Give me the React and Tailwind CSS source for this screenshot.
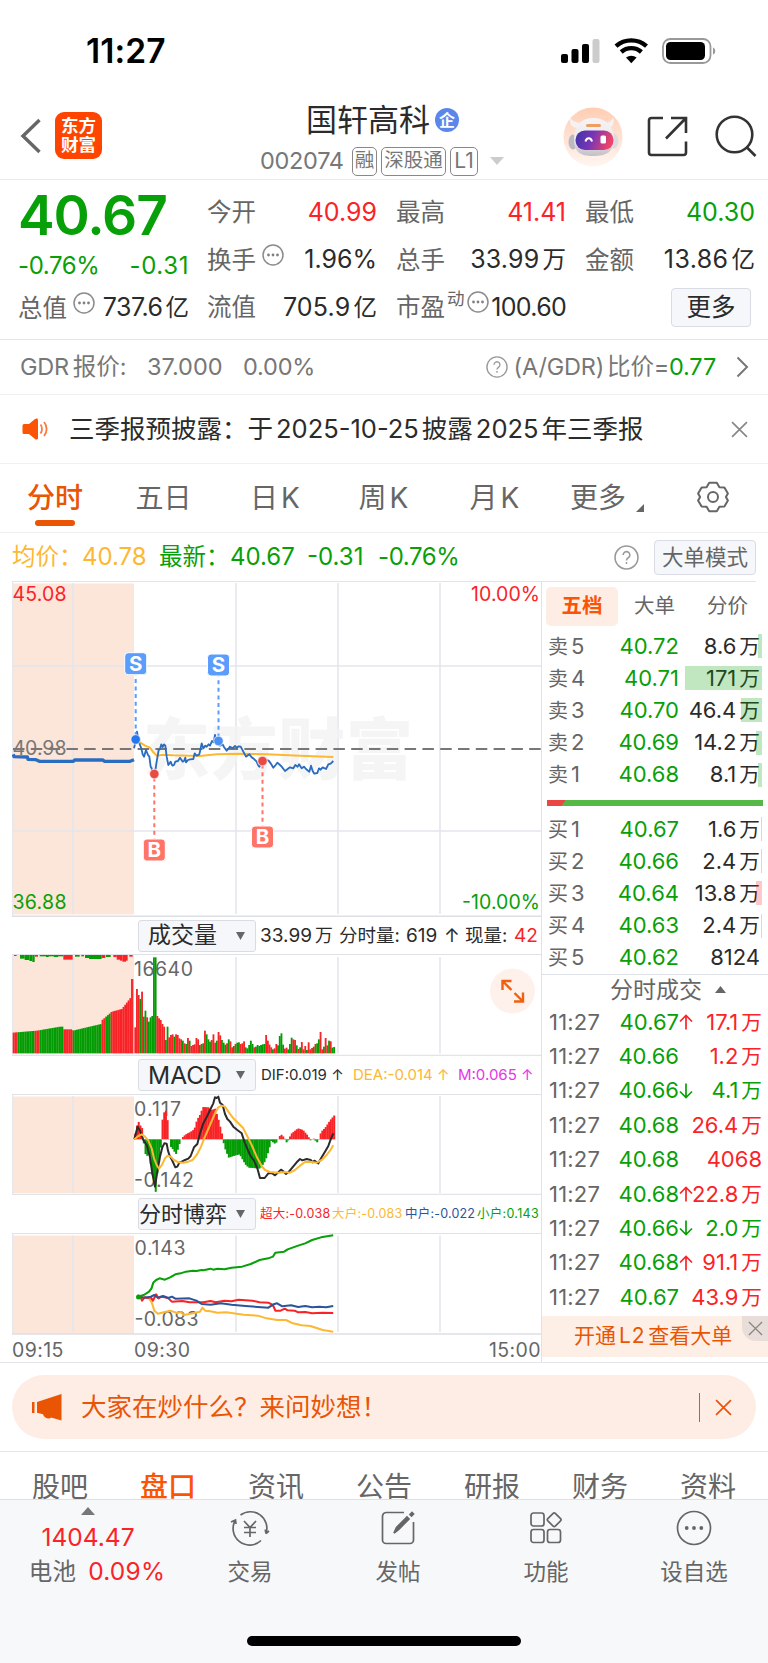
import React from 'react';

const quotes = [
  { label: '今开', value: '40.99', color: 'text-[#fa2328]' },
  { label: '最高', value: '41.41', color: 'text-[#fa2328]' },
  { label: '最低', value: '40.30', color: 'text-[#08a008]' },
];

const sells = [
  { label: '5', price: '40.72', vol: '8.6万', bar: 4 },
  { label: '4', price: '40.71', vol: '171万', bar: 77 },
  { label: '3', price: '40.70', vol: '46.4万', bar: 21 },
  { label: '2', price: '40.69', vol: '14.2万', bar: 6 },
  { label: '1', price: '40.68', vol: '8.1万', bar: 4 },
];

const buys = [
  { label: '1', price: '40.67', vol: '1.6万', bar: 1 },
  { label: '2', price: '40.66', vol: '2.4万', bar: 1 },
  { label: '3', price: '40.64', vol: '13.8万', bar: 6 },
  { label: '4', price: '40.63', vol: '2.4万', bar: 1 },
  { label: '5', price: '40.62', vol: '8124', bar: 0 },
];

const ticks = [
  { price: '40.67', dir: 'up', vol: '17.1万', red: true },
  { price: '40.66', dir: '', vol: '1.2万', red: true },
  { price: '40.66', dir: 'down', vol: '4.1万', red: false },
  { price: '40.68', dir: '', vol: '26.4万', red: true },
  { price: '40.68', dir: '', vol: '4068', red: true },
  { price: '40.68', dir: 'up', vol: '22.8万', red: true },
  { price: '40.66', dir: 'down', vol: '2.0万', red: false },
  { price: '40.68', dir: 'up', vol: '91.1万', red: true },
  { price: '40.67', dir: '', vol: '43.9万', red: true },
];

// chart series, in thirds of a pixel
const preLine = '40,538 42,545 82,546 84,553 108,554 118,559 220,559 224,555 308,555 314,559 390,559 402,554';
const priceLine =
  '402,520 408,495 411,470 416,500 424,520 428,538 432,545 438,525 444,540 448,545 452,575 455,580 458,597 463,597 467,580 470,560 476,525 480,522 484,508 488,516 492,508 496,512 500,545 505,570 512,560 515,568 518,572 522,570 526,560 534,558 540,548 548,560 552,558 556,548 558,562 564,555 570,553 580,552 584,535 590,542 598,538 602,520 605,505 610,520 616,512 620,515 626,508 630,512 636,498 641,502 645,480 650,500 660,512 668,508 672,516 680,527 686,520 690,515 698,520 705,513 710,518 716,514 722,515 730,530 738,545 748,538 756,548 760,550 770,560 774,570 778,575 788,560 800,555 806,557 812,565 820,578 827,570 832,563 840,570 845,575 855,588 863,582 870,577 880,580 886,570 893,575 897,568 905,580 912,575 918,582 928,590 933,572 938,588 943,596 952,594 957,580 962,584 968,577 978,582 985,568 992,566 1000,558';
const avgLine = '411,488 420,502 435,512 450,518 460,532 470,542 490,539 520,541 600,543 650,538 720,536 800,538 900,542 1000,546';
const difLine =
  '403,688 408,668 413,650 420,662 430,690 440,705 450,742 457,790 465,830 472,785 480,740 487,712 493,700 500,701 504,722 508,735 516,750 526,772 532,770 538,758 545,755 555,750 565,746 572,738 582,712 592,702 600,670 610,640 620,622 630,600 640,580 645,562 650,564 655,560 660,578 668,585 675,612 682,627 690,635 700,650 712,660 725,670 735,700 750,735 762,752 772,775 780,804 794,804 805,790 815,789 825,796 835,787 843,779 850,784 858,792 866,786 875,775 890,757 900,747 907,751 920,747 932,750 938,757 943,752 955,760 965,742 975,725 985,708 992,688 1000,670';
const deaLine =
  '403,688 415,678 425,673 435,680 445,692 455,715 462,745 470,765 477,776 485,766 495,745 503,737 512,740 522,750 535,757 550,758 565,755 578,750 590,735 603,710 615,680 630,645 645,610 655,592 665,587 675,590 685,605 700,625 715,640 730,655 740,675 755,705 770,740 785,768 795,780 810,786 835,788 855,786 870,788 885,780 900,767 915,756 930,755 950,758 965,750 980,735 990,722 1000,706';
const smallLine =
  '392,320 410,315 425,305 432,295 437,278 445,270 455,265 470,269 485,262 500,253 515,250 530,245 550,242 560,243 575,240 580,241 600,236 608,239 620,236 640,238 660,233 690,230 715,222 740,210 765,205 778,200 785,188 810,185 820,178 850,167 870,160 890,150 915,142 950,136';
const superLine =
  '392,320 400,320 405,332 412,322 420,324 430,322 436,332 445,313 452,325 460,320 470,322 480,325 490,335 520,333 540,337 580,337 600,333 615,337 640,332 660,334 680,329 720,332 740,337 765,338 778,345 785,362 800,362 812,356 820,361 840,362 850,367 870,366 890,370 920,368 950,369';
const midLine =
  '392,316 400,320 410,323 430,320 440,315 450,323 465,318 480,324 490,320 500,326 540,325 560,332 575,342 600,344 630,340 660,344 700,348 735,351 765,353 780,343 790,340 805,349 830,346 850,351 870,348 890,352 910,350 930,352 950,348';
const bigLine =
  '392,320 405,322 425,325 433,338 440,362 450,371 470,366 485,362 505,369 515,366 525,375 550,370 570,365 577,353 585,362 600,364 620,368 645,367 680,372 695,374 735,377 760,385 790,390 815,390 835,400 860,406 885,408 920,420 950,425';

const preVolume = [[38, 62], [110, 68], [180, 80], [190, 80], [191, 72], [217, 72], [218, 68], [260, 78], [303, 88], [306, 100], [320, 112], [335, 125], [365, 133], [386, 160], [392, 168], [394, 223], [400, 223]];
const macdPoints = [[402, 5], [407, 25], [413, 57], [420, 42], [428, 30], [430, -8], [434, -42], [440, -50], [446, -45], [452, -80], [460, -110], [466, -160], [470, -110], [477, -65], [482, -20], [484, 45], [489, 72], [495, 92], [500, 75], [506, 20], [508, -18], [518, -30], [527, -45], [535, -25], [540, -4], [545, 4], [555, 14], [570, 22], [582, 30], [590, 58], [600, 75], [608, 97], [625, 96], [633, 88], [645, 92], [654, 62], [665, 18], [672, -22], [685, -55], [700, -50], [718, -45], [735, -75], [745, -85], [780, -88], [795, -65], [805, -35], [813, -5], [825, -14], [832, -5], [836, 8], [844, 14], [853, 4], [858, -10], [865, -2], [872, 16], [893, 33], [908, 28], [922, 12], [932, -6], [938, 6], [943, -2], [952, -10], [957, 2], [962, 22], [975, 35], [990, 58], [1003, 73]];
const volumes =
  '78r 193r 175r 163g 185r 110g 128g 108r 95g 108g 112g 288g 288g 112r 105r 100r 88r 80r 40g 80g 48r 55r 57r 50g 57r 55r 45r 42r 38g 30r 28g 46r 38g 22r 25r 27r 46r 42r 25g 28r 30g 68r 57g 42g 35g 40r 57r 32r 38g 64r 54r 40g 32g 26g 30r 42g 36r 18r 22g 28r 32g 33g 28r 30r 36r 18g 15g 25g 38g 28g 18r 20g 25g 22g 25g 27g 28g 55r 38r 26r 18r 12g 15r 28r 24g 52g 60g 26g 14r 17r 12g 28g 47g 42r 40r 24g 13r 18g 34r 12r 22r 10g 33r 12r 16r 20g 28r 30g 42g 64r 12r 20g 46r 24r 38g 36r 17g 19g 20r 15r 12r 20r 14r 10r 12r 8r'.split(' ').slice(0, 118);

const preColors = [[38, 53, 'r'], [53, 104, 'g'], [104, 119, 'r'], [119, 190, 'g'], [190, 218, 'r'], [218, 305, 'g'], [305, 316, 'r'], [316, 332, 'g'], [332, 400, 'r']];
const unmatched = [
  [42, 8, 3, 'r'], [60, 14, 11, 'g'], [74, 14, 15, 'g'], [88, 9, 18, 'g'], [97, 7, 21, 'g'], [105, 9, 5, 'r'], [119, 71, 4, 'g'], [138, 8, 6, 'g'], [162, 12, 6, 'g'],
  [190, 28, 14, 'r'], [225, 14, 5, 'g'], [244, 8, 4, 'g'], [255, 12, 9, 'g'], [267, 38, 12, 'g'], [305, 11, 9, 'r'], [318, 14, 6, 'g'], [340, 10, 6, 'r'],
  [350, 10, 14, 'r'], [360, 7, 17, 'r'], [367, 11, 20, 'r'], [378, 5, 17, 'r'], [388, 10, 5, 'r'],
];

const fills = { r: '#f82326', g: '#049c04' };

// linear interpolation between [x, y] pairs
const sample = (points, x) => {
  for (let i = 1; i < points.length; i++) {
    const [x0, y0] = points[i - 1];
    const [x1, y1] = points[i];
    if (x <= x1) return y0 + ((y1 - y0) * (x - x0)) / (x1 - x0);
  }
  return points[points.length - 1][1];
};

const Amount = ({ children }) => {
  const match = /^(.*?)([万亿])$/.exec(children);
  if (!match) return children;
  return (
    <>
      {match[1]}
      <span className="ml-[3px] tracking-normal text-[0.94em]">{match[2]}</span>
    </>
  );
};

const Dots = ({ className }) => (
  <svg className={className} width="22" height="22" viewBox="0 0 22 22">
    <circle cx="11" cy="11" r="10" fill="none" stroke="#8c8c8c" strokeWidth="1.5" />
    <circle cx="6.5" cy="11" r="1.4" fill="#808080" />
    <circle cx="11" cy="11" r="1.4" fill="#808080" />
    <circle cx="15.5" cy="11" r="1.4" fill="#808080" />
  </svg>
);

const Help = ({ size }) => (
  <svg width={size} height={size} viewBox="0 0 24 24" fill="none" stroke="#999" strokeWidth="1.5">
    <circle cx="12" cy="12" r="11" />
    <path d="M8.8 9.6a3.2 3.2 0 1 1 5 2.6c-1.2.8-1.8 1.3-1.8 2.6" />
    <path d="M12 16.4v1.8" />
  </svg>
);

const Cross = ({ size, color, width = 1.6 }) => (
  <svg width={size} height={size} viewBox="0 0 16 16" stroke={color} strokeWidth={width}>
    <path d="M1 1l14 14M15 1L1 15" />
  </svg>
);

const Arrow = ({ dir }) => (
  <svg width="14" height="16" viewBox="0 0 14 16" fill="none" stroke={dir === 'up' ? '#fa2328' : '#08a008'} strokeWidth="1.7">
    {dir === 'up' && <path d="M7 15.5V1.5M1 7.5l6-6 6 6" />}
    {dir === 'down' && <path d="M7 .5v14M1 8.5l6 6 6-6" />}
  </svg>
);

const StatusBar = () => (
  <div className="flex h-[100px] items-start justify-between pl-[86px] pr-[52px] pt-[38px]">
    <span className="text-[33.5px] font-semibold leading-[26px] tracking-[0.1px] text-black">11:27</span>
    <svg width="156" height="26" viewBox="0 0 156 26">
      <rect x="1" y="16" width="7" height="9" rx="2" />
      <rect x="11.5" y="11" width="7" height="14" rx="2" />
      <rect x="22" y="6" width="7" height="19" rx="2" />
      <rect x="32.5" y="1" width="7" height="24" rx="2" fill="#ccc" />
      <g fill="none" stroke="#000" strokeWidth="4.4">
        <path d="M56 8.2a23 23 0 0 1 30.5 0" />
        <path d="M61.2 14a15 15 0 0 1 20.2 0" />
      </g>
      <path d="M66 19.6a8.5 8.5 0 0 1 10.6 0L71.3 25.3z" />
      <rect x="103" y="1" width="47.5" height="24" rx="7.5" fill="none" stroke="#999" strokeWidth="1.8" />
      <rect x="106" y="4" width="39" height="18" rx="4.5" />
      <path d="M153 9.5c3 1 3 6 0 7z" fill="#999" />
    </svg>
  </div>
);

const Robot = () => (
  <svg width="60" height="60" viewBox="0 0 60 60">
    <defs>
      <linearGradient id="halo" x1="0" y1="0" x2="0" y2="1">
        <stop offset="0" stopColor="#ffcdb3" />
        <stop offset="1" stopColor="#fff6f1" />
      </linearGradient>
      <linearGradient id="visor" x1="0" y1="0" x2="1" y2="0.2">
        <stop offset="0" stopColor="#3d34a8" />
        <stop offset="0.5" stopColor="#7a35b5" />
        <stop offset="1" stopColor="#ee4468" />
      </linearGradient>
      <linearGradient id="shell" x1="0" y1="0" x2="0" y2="1">
        <stop offset="0" stopColor="#f6f4f5" />
        <stop offset="0.5" stopColor="#eceaec" />
        <stop offset="1" stopColor="#c4c0c8" />
      </linearGradient>
    </defs>
    <circle cx="30" cy="30" r="29.5" fill="url(#halo)" />
    <path d="M7 10c-1 6 1 10 7 11l5-5c-6 0-10-2-12-6zM50 10c2 6 0 10-5 11l-4-5c5 0 8-2 9-6z" fill="#f6f2f4" />
    <ellipse cx="10" cy="35" rx="4.5" ry="7.5" fill="#bdb9c2" />
    <ellipse cx="51" cy="34" rx="4.5" ry="7.5" fill="#dedbe0" />
    <path d="M11 32c0-13 7-21 19-21s21 8 21 21-8 17-21 17-19-4-19-17z" fill="url(#shell)" />
    <rect x="23" y="17" width="15" height="3" rx="1.5" fill="#ee9e62" />
    <rect x="12.5" y="23.5" width="38" height="19.5" rx="9.5" fill="url(#visor)" />
    <path d="M22.5 34.5c1-4.5 5.5-4.5 6.5 0" fill="none" stroke="#fff" strokeWidth="2" />
    <rect x="37.5" y="28.5" width="5.5" height="8" rx="1.5" fill="#fff" />
  </svg>
);

const Header = () => (
  <div className="relative flex h-[80px] items-start justify-between border-b border-[#e9e9e9] pl-[20px] pr-[11px] pt-[7px]">
    <div className="flex items-center pt-[5px]">
      <svg width="22" height="36" viewBox="0 0 22 36" fill="none" stroke="#666" strokeWidth="3.4">
        <path d="M19.5 2L3 18l16.5 16" />
      </svg>
      <div className="ml-[13px] flex h-[47px] w-[47px] flex-col items-center justify-center rounded-[9px] bg-[#ff4400] text-[17.5px] font-bold leading-[18.5px] text-white">
        <span>东方</span>
        <span>财富</span>
      </div>
    </div>
    {/* title block is centred on the screen, not between the side icons */}
    <div className="absolute left-[260px] top-0 w-[250px]">
      <div className="flex h-[38px] items-center pl-[46px] pt-px">
        <span className="text-[31px] leading-[38px] text-[#2b2b2b]">国轩高科</span>
        <span className="ml-[5px] flex h-[24px] w-[24px] items-center justify-center rounded-full bg-[#5b87ea] text-[16px] font-bold leading-none text-white">企</span>
      </div>
      <div className="mt-[8px] flex h-[30px] items-center text-[#777]">
        <span className="w-[92px] text-[23.5px] tracking-[-0.3px]">002074</span>
        <span className="flex h-[29px] w-[25px] items-center justify-center rounded-[5px] border-[1.5px] border-[#888] text-[19.5px]">融</span>
        <span className="ml-[4px] flex h-[29px] w-[65px] items-center justify-center rounded-[5px] border-[1.5px] border-[#888] text-[19.5px]">深股通</span>
        <span className="ml-[4px] flex h-[29px] w-[28px] items-center justify-center rounded-[5px] border-[1.5px] border-[#888] text-[21px]">L1</span>
        <svg className="ml-[12px]" width="14" height="8" viewBox="0 0 14 8">
          <path d="M0 0h14L7 8z" fill="#ccc" />
        </svg>
      </div>
    </div>
    <div className="flex items-start">
      <Robot />
      <svg className="ml-[24px] mt-[9px]" width="41" height="41" viewBox="0 0 41 41" fill="none" stroke="#333" strokeWidth="2.6">
        <path d="M16 2H4.5A2.5 2.5 0 0 0 2 4.5v32A2.5 2.5 0 0 0 4.5 39h32a2.5 2.5 0 0 0 2.5-2.5V25.5M24 2h15v15M39 2L19 22.5" />
      </svg>
      <svg className="ml-[27px] mt-[7px]" width="42" height="43" viewBox="0 0 42 43" fill="none" stroke="#333" strokeWidth="2.6">
        <circle cx="19.5" cy="20.5" r="17.8" />
        <path d="M31.5 33l9 9" />
      </svg>
    </div>
  </div>
);

const Quote = () => (
  <div className="flex h-[160px] border-b border-[#e4e4e4] pl-[18px] text-[25px] text-[#666]">
    <div className="w-[171px] pt-[8px] text-[#08a008]">
      <div className="text-[55px] font-semibold leading-[54px] tracking-[-1.1px]">40.67</div>
      <div className="mt-[7px] flex h-[34px] items-center justify-between text-[24px] tracking-[-0.4px]">
        <span>-0.76%</span>
        <span className="tracking-[0.6px]">-0.31</span>
      </div>
      <div className="mt-[8px] flex h-[34px] items-center text-[#666]">
        <span className="text-[24.5px]">总值</span>
        <Dots className="ml-[6px] -mt-[11px]" />
        <span className="ml-auto tracking-[-0.5px] text-[#2b2b2b]"><Amount>737.6亿</Amount></span>
      </div>
    </div>
    <div className="ml-[18px] grid w-[548px] grid-cols-[170px_170px_170px] grid-rows-[47px_48px_47px] gap-x-[19px] pt-[9px]">
      {quotes.map((q) => (
        <div key={q.label} className="flex items-center justify-between">
          <span className="text-[24.5px]">{q.label}</span>
          <span className={q.color}>{q.value}</span>
        </div>
      ))}
      <div className="flex items-center">
        <span className="text-[24.5px]">换手</span>
        <Dots className="ml-[6px] -mt-[10px]" />
        <span className="ml-auto text-[#2b2b2b]">1.96%</span>
      </div>
      <div className="flex items-center justify-between">
        <span className="text-[24.5px]">总手</span>
        <span className="tracking-[0.2px] text-[#2b2b2b]"><Amount>33.99万</Amount></span>
      </div>
      <div className="flex items-center justify-between">
        <span className="text-[24.5px]">金额</span>
        <span className="tracking-[0.4px] text-[#2b2b2b]"><Amount>13.86亿</Amount></span>
      </div>
      <div className="flex items-center justify-between">
        <span className="text-[24.5px]">流值</span>
        <span className="tracking-[0.2px] text-[#2b2b2b]"><Amount>705.9亿</Amount></span>
      </div>
      <div className="flex items-center">
        <span className="text-[24.5px]">市盈</span>
        <span className="-mt-[16px] ml-[2px] text-[17.5px]">动</span>
        <Dots className="-mt-[11px] ml-[2px]" />
        <span className="ml-auto tracking-[-0.7px] text-[#2b2b2b]">100.60</span>
      </div>
      <div className="flex items-center justify-end pr-[4px]">
        <span className="-mt-px flex h-[39px] w-[80px] items-center justify-center rounded-[4px] border border-[#d9dce5] bg-[#f6f7fa] text-[24.5px] text-[#2b2b2b]">更多</span>
      </div>
    </div>
  </div>
);

const GdrRow = () => (
  <div className="flex h-[55px] items-center border-b border-[#f0f0f0] pl-[20px] pr-[19px] text-[23.5px] text-[#777]">
    <span className="w-[127px]"><span className="tracking-[-0.3px]">GDR</span><span className="ml-[4px]">报价:</span></span>
    <span className="w-[96px]">37.000</span>
    <span className="tracking-[-0.2px]">0.00%</span>
    <div className="ml-auto flex items-center">
      <Help size={22} />
      <span className="ml-[6px] tracking-[-0.2px]">(A/GDR)<span className="ml-[3px]">比价</span>=</span>
      <span className="tracking-[-0.2px] text-[#08a008]">0.77</span>
      <svg className="ml-[20px]" width="13" height="22" viewBox="0 0 13 22" fill="none" stroke="#777" strokeWidth="2">
        <path d="M1.5 1.5L11 11l-9.5 9.5" />
      </svg>
    </div>
  </div>
);

const NewsRow = () => (
  <div className="flex h-[69px] items-center border-b border-[#f0f0f0] pl-[22px] pr-[20px]">
    <svg width="26" height="22" viewBox="0 0 26 22">
      <path d="M2 6h5l6-5c1.5-1 3-.5 3 1v18c0 1.5-1.5 2-3 1l-6-5H2a1.5 1.5 0 0 1-1.5-1.5v-7A1.5 1.5 0 0 1 2 6z" fill="#fb5404" />
      <path d="M18.5 6.5c2 2.5 2 6.500 0 9M22 4c3.500 4 3.500 10 0 14" fill="none" stroke="#fb7a3c" strokeWidth="1.8" />
    </svg>
    <span className="ml-[21px] whitespace-nowrap text-[25.5px] text-[#2b2b2b]">
      三季报预披露：于<span className="mx-[3px]">2025-10-25</span>披露<span className="mx-[3px]">2025</span>年三季报
    </span>
    <span className="ml-auto"><Cross size={17} color="#888" /></span>
  </div>
);

const PeriodTabs = () => (
  <div className="flex h-[69px] border-b border-[#eee] text-[28px] leading-[68px] text-[#666]">
    <div className="flex w-[110px] flex-col items-center">
      <span className="h-[56px] font-medium text-[#ea5504]">分时</span>
      <span className="h-[6px] w-[40px] rounded-full bg-[#ea5504]" />
    </div>
    <span className="w-[107px] text-center">五日</span>
    <span className="w-[116px] text-center">日<span className="ml-[3px]">K</span></span>
    <span className="w-[101px] text-center">周<span className="ml-[3px]">K</span></span>
    <span className="w-[121px] text-center">月<span className="ml-[3px]">K</span></span>
    <span className="ml-[15px]">更多</span>
    <svg className="ml-[10px] mt-[40px]" width="8" height="8" viewBox="0 0 8 8">
      <path d="M8 0v8H0z" fill="#666" />
    </svg>
    <svg className="ml-[53px] mt-[17px]" width="32" height="32" viewBox="0 0 32 32" fill="none" stroke="#666" strokeWidth="2">
      <path d="M12.2 1.8h7.6l2.6 4.4 5 .2 3.5 6-2 3.6 2 3.6-3.5 6-5 .2-2.6 4.4h-7.6l-2.6-4.4-5-.2-3.5-6 2-3.6-2-3.6 3.5-6 5-.2z" strokeLinejoin="round" />
      <circle cx="16" cy="16" r="5" />
    </svg>
  </div>
);

const PriceBar = () => (
  <div className="mx-[12px] flex h-[49px] items-center whitespace-nowrap border-b border-[#e3e4ea] text-[24px] text-[#08a008]">
    <span className="w-[70px] text-[23.5px] text-[#fdb833]">均价：</span>
    <span className="w-[77px] text-[#fdb833]">40.78</span>
    <span className="w-[71px] text-[23.5px]">最新：</span>
    <span className="w-[77px]">40.67</span>
    <span className="w-[71px]">-0.31</span>
    <span className="tracking-[-0.4px]">-0.76%</span>
    <span className="ml-auto"><Help size={25} /></span>
    <span className="ml-[15px] flex h-[35px] w-[102px] items-center justify-center rounded-[4px] border border-[#d9dce5] bg-[#f6f7fa] text-[21.5px] text-[#666]">大单模式</span>
  </div>
);

const Grid = ({ top, bottom }) => (
  <g stroke="#e4e6ed" strokeWidth="1.6">
    <path d={`M12.7 ${top - 2}V${bottom + 2}`} strokeWidth="1.2" />
    <path d={`M73 ${top}V${bottom}M236 ${top}V${bottom}M338 ${top}V${bottom}M440 ${top}V${bottom}`} />
  </g>
);

const Marker = ({ x, y, dotY, letter, color, dot }) => (
  <g>
    <path d={`M${x} ${y}V${dotY}`} stroke={color} strokeWidth="2" strokeDasharray="4 3.6" />
    <circle cx={x} cy={dotY} r="4.8" fill={dot} stroke="#fff" strokeOpacity="0.6" strokeWidth="1.2" />
    <rect x={x - 11} y={y - 11} width="22" height="22" rx="3.5" fill={color} stroke="#fff" />
    <text x={x} y={y + 7.3} fontSize="20.5" fontWeight="700" textAnchor="middle" fill="#fff">{letter}</text>
  </g>
);

const PriceChart = () => (
  <svg className="block" width="529" height="335" viewBox="12 582 529 335">
    <rect x="13" y="583.5" width="121" height="331" fill="#fce5d9" />
    <Grid top={583} bottom={914} />
    <path d="M13 666H541M13 831H541" stroke="#e4e6ed" strokeWidth="1.6" />
    <text x="143" y="774" fontSize="67" fontWeight="900" fill="#f3f3f4" fillOpacity="0.8" textLength="270">东方财富</text>
    <path d="M13 749H541" stroke="#777" strokeWidth="1.8" strokeDasharray="11.5 6.3" />
    <g transform="translate(0 575) scale(0.33333)" fill="none" strokeLinejoin="round">
      <polyline points={preLine} stroke="#2a6cc0" strokeWidth="10" />
      <polyline points={avgLine} stroke="#fdb833" strokeWidth="6" />
      <polyline points={priceLine} stroke="#2a6cc0" strokeWidth="5.5" />
    </g>
    <Marker x={135.7} y={663.7} dotY={739.5} letter="S" color="#5b9cfc" dot="#2477ee" />
    <Marker x={218.5} y={665} dotY={741} letter="S" color="#5b9cfc" dot="#4a8ff5" />
    <Marker x={154.3} y={850} dotY={774} letter="B" color="#ff7466" dot="#ea4a44" />
    <Marker x={262.5} y={837} dotY={761} letter="B" color="#ff7466" dot="#ea4a44" />
    <g fontSize="19.5">
      <text x="12.5" y="600.5" fill="#fa2328" textLength="54">45.08</text>
      <text x="12.5" y="754.5" fill="#777" textLength="54">40.98</text>
      <text x="12.5" y="908.5" fill="#08a008" textLength="54">36.88</text>
      <text x="471" y="600.5" fill="#fa2328" textLength="69">10.00%</text>
      <text x="462" y="908.5" fill="#08a008" textLength="78">-10.00%</text>
    </g>
    <path d="M12 916.2H541" stroke="#dcdfe6" strokeWidth="1.4" />
  </svg>
);

const VolumeChart = () => (
  <svg className="block" width="529" height="101" viewBox="12 955 529 101">
    <rect x="13" y="955" width="121" height="98.5" fill="#fce5d9" />
    <Grid top={957} bottom={1053.5} />
    <text x="134" y="976" fontSize="19.5" fill="#666" textLength="59">16640</text>
    <g transform="translate(0 910) scale(0.33333)">
      {preColors.map(([from, to, c]) => {
        const bars = [];
        for (let x = from; x < to; x += 5.1) {
          const h = sample(preVolume, x + 2);
          bars.push(<rect key={x} x={x} y={430 - h} width={Math.min(5.6, to - x)} height={h} fill={fills[c]} />);
        }
        return bars;
      })}
      {unmatched.map(([x, w, h, c]) => (
        <rect key={x} x={x} y="135" width={w} height={h} fill={fills[c]} />
      ))}
      {volumes.map((v, i) => {
        const h = parseInt(v, 10);
        return <rect key={i} x={403 + i * 5.1} y={430 - h} width="5.5" height={h} fill={fills[v.slice(-1)]} />;
      })}
    </g>
    <circle cx="512.5" cy="991" r="22.5" fill="#fef1eb" />
    <g fill="none" stroke="#f0600f" strokeWidth="2.4">
      <path d="M502.5 990v-9h9M503 981.5l8.5 8.5M523 992.5v9h-9M522.5 1001L514.5 993" />
    </g>
    <path d="M12 1055.3H541" stroke="#e3e4ea" strokeWidth="1.2" />
  </svg>
);

const MacdChart = () => (
  <svg className="block" width="529" height="100" viewBox="12 1095 529 100">
    <rect x="13" y="1096.5" width="121" height="96.5" fill="#fce5d9" />
    <Grid top={1096} bottom={1193} />
    <g fontSize="19.5" fill="#666">
      <text x="134" y="1115.5" textLength="47">0.117</text>
      <text x="134" y="1187" textLength="60">-0.142</text>
    </g>
    <g transform="translate(0 910) scale(0.33333)" fill="none" strokeLinejoin="round">
      {Array.from({ length: 118 }, (_, i) => {
        const x = 403 + i * 5.1;
        const v = sample(macdPoints, x + 2);
        return <rect key={i} x={x} y={v > 0 ? 688 - v : 688} width="6" height={Math.abs(v)} fill={v > 0 ? fills.r : fills.g} />;
      })}
      <polyline points={difLine} stroke="#2b2b2b" strokeWidth="6" />
      <polyline points={deaLine} stroke="#fdb833" strokeWidth="6" />
    </g>
    <path d="M12 1194.3H541" stroke="#e3e4ea" strokeWidth="1.2" />
  </svg>
);

const GameChart = () => (
  <svg className="block" width="529" height="101" viewBox="12 1234 529 101">
    <rect x="13" y="1235.5" width="121" height="98.5" fill="#fce5d9" />
    <Grid top={1235.5} bottom={1332} />
    <g fontSize="19.5" fill="#666">
      <text x="134.5" y="1255" textLength="51">0.143</text>
      <text x="134.5" y="1326" textLength="64">-0.083</text>
    </g>
    <g transform="translate(0 1190) scale(0.35076 0.33333)" fill="none" strokeWidth="6" strokeLinejoin="round">
      <polyline points={bigLine} stroke="#fdb833" />
      <polyline points={superLine} stroke="#f82326" />
      <polyline points={midLine} stroke="#2b559b" />
      <polyline points={smallLine} stroke="#08a008" />
    </g>
    <circle cx="138.5" cy="1297" r="2.5" fill="#08a008" />
    <path d="M12 1334H541" stroke="#dcdfe6" strokeWidth="1.4" />
  </svg>
);

const IndicatorBar = ({ name, nameClass, className, children }) => (
  <div className={`flex items-center border-b border-[#dfe1e8] pl-[126px] ${className}`}>
    <div className="flex h-[32px] w-[118px] shrink-0 items-center justify-between rounded-[3px] border border-[#d9dce5] bg-[#f6f7fa] pr-[10px] text-[#2b2b2b]">
      <span className={`whitespace-nowrap ${nameClass}`}>{name}</span>
      <svg width="9" height="8" viewBox="0 0 9 8">
        <path d="M0 0h9L4.5 8z" fill="#666" />
      </svg>
    </div>
    {children}
  </div>
);

const Charts = () => (
  <div className="w-[529px]">
    <PriceChart />
    <IndicatorBar name="成交量" nameClass="pl-[9px] text-[23px]" className="h-[38px]">
      <div className="ml-[4px] flex items-center whitespace-nowrap pt-px text-[19px] text-[#2b2b2b]">
        <span className="w-[79px]"><Amount>33.99万</Amount></span>
        <span className="w-[67px] text-[18.5px]">分时量:</span>
        <span className="w-[38px]">619</span>
        <span className="w-[21px]">↑</span>
        <span className="w-[49px] text-[18.5px]">现量:</span>
        <span className="text-[#fa2328]">42</span>
      </div>
    </IndicatorBar>
    <VolumeChart />
    <IndicatorBar name="MACD" nameClass="pl-[9px] text-[24.5px]" className="h-[39px]">
      <div className="ml-[5px] flex whitespace-nowrap text-[15px]">
        <span className="w-[92px] text-[#2b2b2b]">DIF:0.019 ↑</span>
        <span className="w-[105px] text-[#fdb833]">DEA:-0.014 ↑</span>
        <span className="text-[#e834e8]">M:0.065 ↑</span>
      </div>
    </IndicatorBar>
    <MacdChart />
    <IndicatorBar name="分时博弈" nameClass="text-[22px]" className="h-[39px]">
      <div className="ml-[4px] flex whitespace-nowrap pt-px text-[12.5px]">
        <span className="w-[72px] tracking-[0.2px] text-[#fa2328]">超大:-0.038</span>
        <span className="w-[73px] tracking-[0.2px] text-[#fdb833]">大户:-0.083</span>
        <span className="w-[72px] tracking-[0.2px] text-[#2b559b]">中户:-0.022</span>
        <span className="tracking-[0.3px] text-[#08a008]">小户:0.143</span>
      </div>
    </IndicatorBar>
    <GameChart />
    <div className="flex h-[27px] items-center pt-[4px] text-[19.5px] leading-none text-[#666]">
      <span className="w-[122px] tracking-[0.4px]">09:15</span>
      <span className="tracking-[0.4px]">09:30</span>
      <span className="ml-auto tracking-[0.4px]">15:00</span>
    </div>
  </div>
);

const DepthRow = ({ side, row, barClass }) => (
  <div className="relative flex h-[32.2px] items-center pl-[6px] text-[22px]">
    <span className="w-[54px] text-[#666]"><span className="mr-[3px] text-[20px]">{side}</span>{row.label}</span>
    <span className="w-[77px] text-right text-[#08a008]">{row.price}</span>
    <span className="w-[81px] text-right text-[#2b2b2b]"><Amount>{row.vol}</Amount></span>
    <span className={`absolute right-[6px] top-[4px] h-[24px] ${barClass}`} style={{ width: row.bar }} />
  </div>
);

const OrderBook = () => (
  <div className="relative w-[227px] border-l border-[#e0e2e9]">
    <div className="flex h-[48px] items-center pl-[4px] text-[20.5px] text-[#666]">
      <span className="flex h-[39px] w-[72px] items-center justify-center rounded-[5px] bg-[#feede5] font-bold text-[#fb5404]">五档</span>
      <span className="ml-[16px] w-[73px]">大单</span>
      <span>分价</span>
    </div>
    {sells.map((row) => (
      <DepthRow key={row.label} side="卖" row={row} barClass="bg-[#08a008]/25" />
    ))}
    <div className="flex h-[22px] items-center pl-[5px] pt-[2px]">
      <svg width="216" height="6" viewBox="0 0 216 6">
        <path d="M0 0h216v6H0z" fill="#56b846" />
        <path d="M0 0h18.5l-4 6H0z" fill="#ea4643" />
      </svg>
    </div>
    {buys.map((row) => (
      <DepthRow key={row.label} side="买" row={row} barClass="bg-[#fa2328]/25" />
    ))}
    <div className="flex h-[31px] items-center border-t border-[#dfe1e8] pl-[68px] text-[23px] text-[#666]">
      分时成交
      <svg className="ml-[13px]" width="11" height="7" viewBox="0 0 11 7">
        <path d="M0 7h11L5.5 0z" fill="#666" />
      </svg>
    </div>
    {ticks.map((t, i) => (
      <div key={i} className="flex h-[34.4px] items-center pl-[7px] text-[22px]">
        <span className="w-[56px] tracking-[0.2px] text-[#666]">11:27</span>
        <span className="w-[74px] text-right text-[#08a008]">{t.price}</span>
        <span className="w-[15px]"><Arrow dir={t.dir} /></span>
        <span className={`flex w-[68px] items-center justify-end whitespace-nowrap ${t.red ? 'text-[#fa2328]' : 'text-[#08a008]'}`}><Amount>{t.vol}</Amount></span>
      </div>
    ))}
    <div className="relative mt-[2px] flex h-[41px] items-center bg-[#fdeee6] pb-[3px] pl-[32px] text-[21px] text-[#ea5504]">
      开通<span className="mx-[3px] tracking-[0.8px]">L2</span>查看大单
      <span className="absolute right-0 top-0 flex h-[25px] w-[26px] items-center justify-center rounded-bl-[14px] bg-[#e8ddd8]">
        <Cross size={15} color="#888" width={1.4} />
      </span>
    </div>
  </div>
);

const Promo = () => (
  <div className="border-y border-[#e4e5e9] px-[12px] py-[12px]">
    <div className="flex h-[64px] items-center rounded-full bg-[#feede4] pl-[19px] pr-[24px] text-[#ea5504]">
      <svg width="32" height="27" viewBox="0 0 32 27" fill="#ea5504">
        <path d="M1 8h2.5v11H1zM6 8L30.5 0v26.5L20 23.5c-1.5 2-6.5 1.5-8-3.2L6 18.7z" />
      </svg>
      <span className="ml-[18px] text-[25.5px]">大家在炒什么？来问妙想！</span>
      <span className="ml-auto h-[29px] w-[1.5px] bg-[#ea5504]" />
      <span className="ml-[15px]"><Cross size={17} color="#ea5504" /></span>
    </div>
  </div>
);

const sections = ['股吧', '盘口', '资讯', '公告', '研报', '财务', '资料'];

const SectionTabs = () => (
  <div className="flex h-[47px] pl-[6px]">
    {sections.map((s) => (
      <span key={s} className={`w-[108px] shrink-0 pt-[15px] text-center text-[28px] leading-[40px] ${s === '盘口' ? 'font-medium text-[#fb5404]' : 'text-[#666]'}`}>{s}</span>
    ))}
  </div>
);

const BottomItem = ({ label, className, children }) => (
  <div className={`flex flex-col items-center pt-[8px] text-[22.5px] text-[#666] ${className}`}>
    <svg width="40" height="40" viewBox="0 0 40 40" fill="none" stroke="#666" strokeWidth="1.7">
      {children}
    </svg>
    <span className="mt-[7px] leading-[34px]">{label}</span>
  </div>
);

const BottomBar = () => (
  <div className="relative z-10 flex h-[164px] flex-col border-t-[1.5px] border-[#dfe0e3] bg-[#f7f8fa]">
    <div className="flex">
      <div className="flex w-[176px] flex-col items-center pt-[7px] text-[24.5px] text-[#fa2328]">
        <svg width="14" height="8" viewBox="0 0 14 8">
          <path d="M0 8h14L7 0z" fill="#777" />
        </svg>
        <span className="mt-[5px] leading-[34px]">1404.47</span>
        <span className="ml-[18px] whitespace-nowrap leading-[34px] tracking-[0.2px]"><span className="mr-[12px] text-[23.5px] text-[#666]">电池</span>0.09%</span>
      </div>
      <BottomItem label="交易" className="w-[148px]">
        <path d="M10.5 7A16.5 16.5 0 0 1 36 25.5M36 25.5l3-2.5M36 25.5l-.8-4M31 32.5A16.5 16.5 0 0 1 5.5 12M1 14l4.5-2 .5 4M14 13l6 6.5 6-6.5M20 19.5V29M14 19.5h12M14 24.5h12" />
      </BottomItem>
      <BottomItem label="发帖" className="w-[148px]">
        <path d="M26 4.5H8A4 4 0 0 0 4.5 8v24A3.5 3.5 0 0 0 8 35.5h24a3.5 3.5 0 0 0 3.5-3.5V14" />
        <path d="M16 25l2.5-5.5L29 9l2 2-10.5 10.5zM32 6.5l2-2 1.5 1.5-2 2z" fill="#666" />
      </BottomItem>
      <BottomItem label="功能" className="w-[148px]">
        <rect x="5" y="5" width="13" height="13" rx="2.5" />
        <rect x="5" y="21.5" width="13" height="13" rx="2.5" />
        <rect x="21.5" y="21.5" width="13" height="13" rx="2.5" />
        <rect x="23" y="6.5" width="10.5" height="10.5" rx="1.5" transform="rotate(45 28.2 11.7)" />
      </BottomItem>
      <BottomItem label="设自选" className="w-[148px]">
        <circle cx="20" cy="20" r="16.5" />
        <g fill="#666" stroke="none">
          <circle cx="12.7" cy="20" r="1.9" />
          <circle cx="20" cy="20" r="1.9" />
          <circle cx="27.3" cy="20" r="1.9" />
        </g>
      </BottomItem>
    </div>
    <div className="mx-auto mb-[17px] mt-auto h-[10px] w-[274px] rounded-full bg-black" />
  </div>
);

const App = () => {
  return (
    <div className="h-[1663px] w-[768px] overflow-hidden bg-white font-['Inter','Noto_Sans_CJK_SC',sans-serif]">
      <StatusBar />
      <Header />
      <Quote />
      <GdrRow />
      <NewsRow />
      <PeriodTabs />
      <PriceBar />
      <div className="flex h-[780px] pl-[12px]">
        <Charts />
        <OrderBook />
      </div>
      <Promo />
      <SectionTabs />
      <BottomBar />
    </div>
  );
};

export default App;
